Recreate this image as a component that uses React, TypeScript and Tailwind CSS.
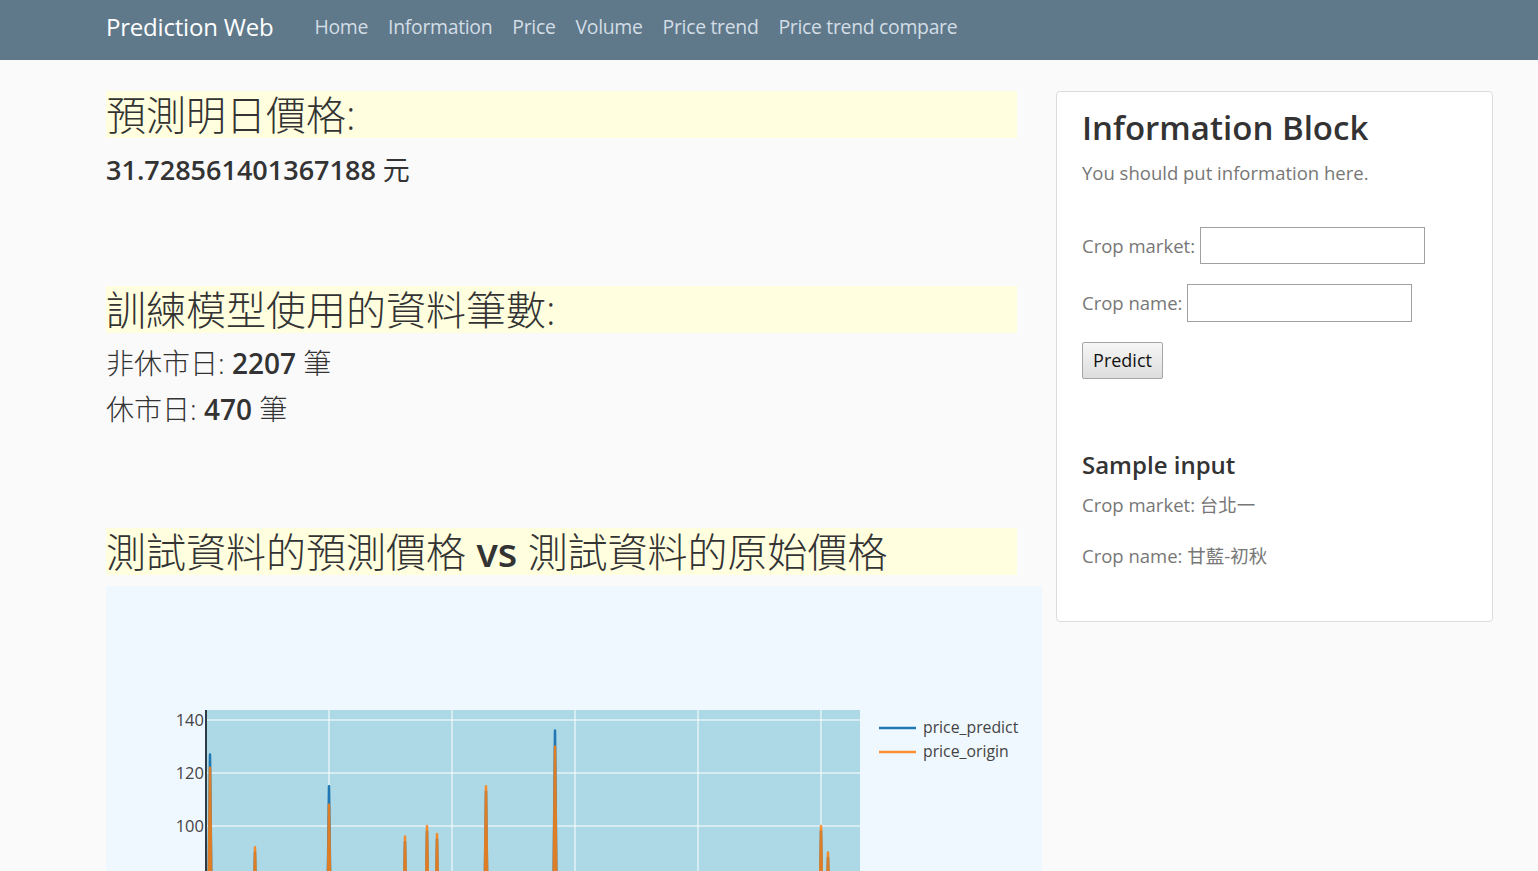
import React from "react";

const FONT = '"Open Sans", "Noto Sans", "Noto Sans CJK TC", sans-serif';

function Chart() {
  const y = (v: number) => 134 + (140 - v) * 2.65;
  const xs = [100, 754];
  const grid = [223, 346, 469, 592, 715];
  // spikes: [x, originPeak, predictPeak]
  const spikes: [number, number, number][] = [
    [104, 122, 127],
    [149, 92, 90],
    [223, 108, 115],
    [299, 96, 94],
    [321, 100, 98],
    [331, 97, 95],
    [380, 115, 113],
    [449, 130, 136],
    [715, 100, 98],
    [722, 90, 88],
  ];
  const base = 55;
  const build = (idx: 1 | 2) => {
    const pts: string[] = [`${xs[0]},${y(base)}`];
    for (const s of spikes) {
      pts.push(`${s[0] - 2},${y(base)}`);
      pts.push(`${s[0]},${y(s[idx])}`);
      pts.push(`${s[0] + 2},${y(base)}`);
    }
    pts.push(`${xs[1]},${y(base)}`);
    return pts.join(" ");
  };
  return (
    <svg width="936" height="450" className="block">
      <rect x="100" y="124" width="654" height="246" fill="#add8e6" />
      {[140, 120, 100, 80, 60].map((v) => (
        <line key={v} x1="100" x2="754" y1={y(v)} y2={y(v)} stroke="#ffffff" strokeWidth="1" />
      ))}
      {grid.map((gx) => (
        <line key={gx} x1={gx} x2={gx} y1="124" y2="370" stroke="#ffffff" strokeWidth="1" />
      ))}
      <line x1="100" x2="100" y1="124" y2="370" stroke="#2f3b44" strokeWidth="2" />
      {[140, 120, 100].map((v) => (
        <text key={v} x="98" y={y(v) + 6} textAnchor="end" fontSize="16.5" fill="#444" fontFamily={FONT}>
          {v}
        </text>
      ))}
      <polyline points={build(2)} fill="none" stroke="#1f77b4" strokeWidth="2.5" strokeLinejoin="round" />
      <polyline points={build(1)} fill="none" stroke="#ff7f0e" strokeWidth="2.5" strokeLinejoin="round" opacity="0.85" />
      <line x1="773" x2="810" y1="142" y2="142" stroke="#1f77b4" strokeWidth="2.5" />
      <line x1="773" x2="810" y1="166" y2="166" stroke="#ff7f0e" strokeWidth="2.5" opacity="0.85" />
      <text x="817" y="147" fontSize="15.8" fill="#444" fontFamily={FONT}>price_predict</text>
      <text x="817" y="171" fontSize="15.8" fill="#444" fontFamily={FONT}>price_origin</text>
    </svg>
  );
}

export default function App() {
  return (
    <div className="min-h-[871px] bg-[#fafafa] text-[#333]" style={{ fontFamily: FONT }}>
      <nav className="h-[60px] bg-[#5f798b] flex items-center pl-[106px] pb-[6px]">
        <span className="text-white text-[24px] tracking-[-0.2px] mr-[41px]">Prediction Web</span>
        <div className="flex gap-[20px] text-[19.4px] text-[#d3dde5] tracking-[-0.3px]">
          <span>Home</span>
          <span>Information</span>
          <span>Price</span>
          <span>Volume</span>
          <span>Price trend</span>
          <span>Price trend compare</span>
        </div>
      </nav>
      <div className="flex pl-[106px] pt-[31px] gap-[14px]">
        <div className="w-[936px]">
          <div className="w-[911px] h-[47px] bg-[#ffffe0] text-[40px] leading-[47px] text-[#333] font-light">預測明日價格:</div>
          <div className="text-[27px] mt-[14px] leading-[36px]">
            <span className="font-semibold">31.728561401367188</span> 元
          </div>
          <div className="w-[911px] h-[47px] bg-[#ffffe0] text-[40px] leading-[47px] mt-[98px] font-light">訓練模型使用的資料筆數:</div>
          <div className="text-[28px] leading-[46px] mt-[7px]">
            <span className="font-light">非休市日:</span> <span className="font-semibold">2207</span> <span className="font-light">筆</span>
          </div>
          <div className="text-[28px] leading-[46px]">
            <span className="font-light">休市日:</span> <span className="font-semibold">470</span> <span className="font-light">筆</span>
          </div>
          <div className="w-[911px] h-[47px] bg-[#ffffe0] text-[40px] leading-[47px] mt-[96px] font-light">
            測試資料的預測價格 <span className="font-semibold">vs</span> 測試資料的原始價格
          </div>
          <div className="mt-[11px] bg-[#f0f8ff] w-[936px] h-[450px]">
            <Chart />
          </div>
        </div>
        <div className="w-[437px] h-[531px] bg-white border border-[#dcdcdc] rounded-[4px] pl-[25px] pt-[14px]">
          <div className="text-[33px] font-semibold text-[#333] leading-[44px]">Information Block</div>
          <div className="text-[18.5px] text-[#777] mt-[9px] leading-[28px]">You should put information here.</div>
          <div className="flex items-center mt-[40px] text-[18.5px] text-[#777]">
            <span>Crop market:</span>
            <input className="ml-[5px] w-[225px] h-[37px] border border-[#a0a0a0] bg-white" />
          </div>
          <div className="flex items-center mt-[20px] text-[18.5px] text-[#777]">
            <span>Crop name:</span>
            <input className="ml-[5px] w-[225px] h-[38px] border border-[#a0a0a0] bg-white" />
          </div>
          <button className="mt-[20px] w-[81px] h-[37px] border border-[#a6a6a6] bg-gradient-to-b from-[#f6f6f6] to-[#dddddd] text-[18px] text-[#111] rounded-[2px]">
            Predict
          </button>
          <div className="mt-[70px] text-[24px] font-semibold text-[#333] leading-[32px]">Sample input</div>
          <div className="mt-[10px] text-[18.5px] text-[#777] leading-[28px]">Crop market: 台北一</div>
          <div className="mt-[23px] text-[18.5px] text-[#777] leading-[28px]">Crop name: 甘藍-初秋</div>
        </div>
      </div>
    </div>
  );
}
